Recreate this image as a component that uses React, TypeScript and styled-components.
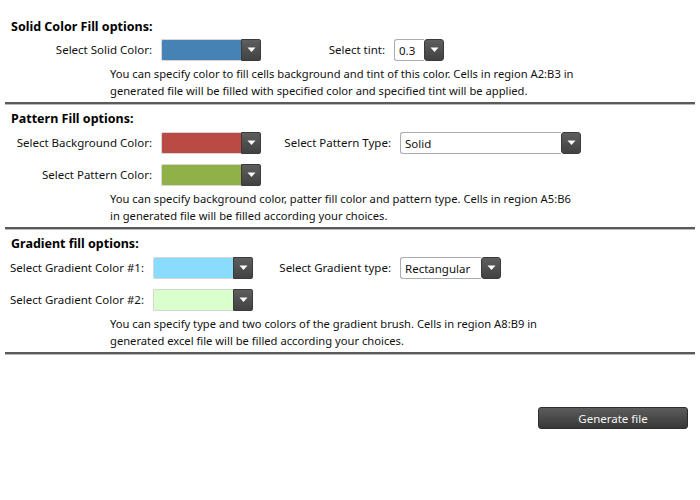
import React from "react";
import styled, { createGlobalStyle } from "styled-components";

const Global = createGlobalStyle`
  html, body { margin: 0; padding: 0; background: #ffffff; }
  body { font-family: "Noto Sans", "Open Sans", sans-serif; color: #000; }
`;

const Page = styled.div`
  width: 700px;
  box-sizing: border-box;
  padding: 19px 5px 0 5px;
  display: flex;
  flex-direction: column;
`;

const Section = styled.section<{ $first?: boolean }>`
  display: flex;
  flex-direction: column;
  padding-top: ${(p) => (p.$first ? 0 : 7)}px;
  border-bottom: 2px solid #5a5a5a;
  box-shadow: 0 1px 0 #b8b8b8;
`;

const Title = styled.h2<{ $first?: boolean }>`
  margin: 0 0 ${(p) => (p.$first ? 4 : 5)}px 6px;
  font-size: 12.5px;
  line-height: 16px;
  font-weight: 700;
  color: #000;
`;

const Grid = styled.div<{ $l1: number; $l2: number }>`
  display: grid;
  grid-template-columns: ${(p) => p.$l1}px 100px ${(p) => p.$l2}px auto;
  column-gap: 9px;
  row-gap: 10px;
  align-items: center;
  justify-items: start;
`;

const Label = styled.span`
  justify-self: end;
  font-size: 11.5px;
  line-height: 22px;
  color: #111;
  white-space: nowrap;
`;

const Desc = styled.p`
  margin: 4px 0 3px 105px;
  font-size: 11.2px;
  line-height: 17px;
  color: #111;
  white-space: nowrap;
`;

const ComboShell = styled.div<{ $w: number }>`
  display: flex;
  width: ${(p) => p.$w}px;
  height: 22px;
  box-sizing: border-box;
`;

const Swatch = styled.div<{ $c: string }>`
  flex: 1;
  background: ${(p) => p.$c};
  border: 1px solid #d6d6d6;
  border-right: none;
  border-radius: 2px 0 0 2px;
`;

const TextBox = styled.div`
  flex: 1;
  display: flex;
  align-items: center;
  padding-left: 4px;
  font-size: 11.5px;
  color: #111;
  background: #fff;
  border: 1px solid #a9acb2;
  border-right: none;
  border-radius: 3px 0 0 3px;
`;

const DropBtn = styled.div<{ $round?: boolean }>`
  width: 20px;
  height: 22px;
  display: flex;
  align-items: center;
  justify-content: center;
  background: linear-gradient(#5e5e5e, #424242);
  border-radius: ${(p) => (p.$round ? "3px" : "0 2px 2px 0")};
  box-sizing: border-box;
  border: 1px solid #3a3a3a;
`;

const Arrow = () => (
  <svg width="9" height="6" viewBox="0 0 9 6">
    <path d="M0.5 0.5 H8.5 L4.5 5 Z" fill="#ffffff" />
  </svg>
);

const ColorCombo = ({ color }: { color: string }) => (
  <ComboShell $w={100}>
    <Swatch $c={color} />
    <DropBtn>
      <Arrow />
    </DropBtn>
  </ComboShell>
);

const TextCombo = ({ value, width }: { value: string; width: number }) => (
  <ComboShell $w={width}>
    <TextBox>{value}</TextBox>
    <DropBtn $round>
      <Arrow />
    </DropBtn>
  </ComboShell>
);

const Footer = styled.div`
  display: flex;
  justify-content: flex-end;
  padding: 53px 7px 0 0;
`;

const GenerateButton = styled.button`
  width: 150px;
  height: 22px;
  border: 1px solid #2e2e2e;
  border-radius: 3px;
  background: linear-gradient(#5c5c5c, #383838);
  color: #f4f4f4;
  font-family: inherit;
  font-size: 11.5px;
  padding: 0;
  cursor: pointer;
`;

export default function App() {
  return (
    <>
      <Global />
      <Page>
        <Section $first>
          <Title $first>Solid Color Fill options:</Title>
          <Grid $l1={147} $l2={115}>
            <Label>Select Solid Color:</Label>
            <ColorCombo color="#4682b4" />
            <Label>Select tint:</Label>
            <TextCombo value="0.3" width={50} />
          </Grid>
          <Desc>
            You can specify color to fill cells background and tint of this color. Cells in region A2:B3 in
            <br />
            generated file will be filled with specified color and specified tint will be applied.
          </Desc>
        </Section>
        <Section>
          <Title>Pattern Fill options:</Title>
          <Grid $l1={147} $l2={121}>
            <Label>Select Background Color:</Label>
            <ColorCombo color="#b94a44" />
            <Label>Select Pattern Type:</Label>
            <TextCombo value="Solid" width={181} />
            <Label>Select Pattern Color:</Label>
            <ColorCombo color="#8fb147" />
          </Grid>
          <Desc>
            You can specify background color, patter fill color and pattern type. Cells in region A5:B6
            <br />
            in generated file will be filled according your choices.
          </Desc>
        </Section>
        <Section>
          <Title>Gradient fill options:</Title>
          <Grid $l1={139} $l2={129}>
            <Label>Select Gradient Color #1:</Label>
            <ColorCombo color="#8adcfc" />
            <Label>Select Gradient type:</Label>
            <TextCombo value="Rectangular" width={101} />
            <Label>Select Gradient Color #2:</Label>
            <ColorCombo color="#d9ffcc" />
          </Grid>
          <Desc>
            You can specify type and two colors of the gradient brush. Cells in region A8:B9 in
            <br />
            generated excel file will be filled according your choices.
          </Desc>
        </Section>
        <Footer>
          <GenerateButton>Generate file</GenerateButton>
        </Footer>
      </Page>
    </>
  );
}
